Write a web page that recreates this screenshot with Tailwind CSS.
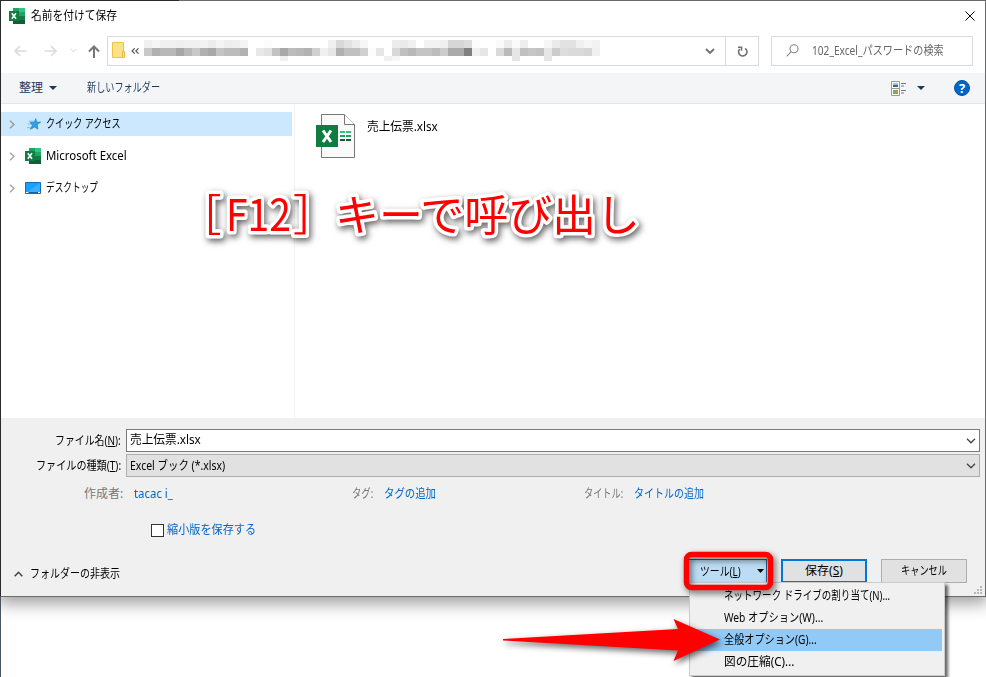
<!DOCTYPE html>
<html lang="ja" class="h-full">

<head>
    <meta charset="UTF-8">
    <meta name="viewport" content="width=device-width, initial-scale=1.0">
    <title>名前を付けて保存</title>
    <script src="https://cdn.jsdelivr.net/npm/@tailwindcss/browser@4"></script>
</head>

<body class="relative h-[677px] w-[986px] overflow-hidden bg-white font-['Noto_Sans','Noto_Sans_CJK_JP',sans-serif] text-[12px] leading-4 text-black">
    <svg class="hidden">
        <symbol id="excel" viewBox="0 0 16 16">
            <path d="M4 0h12v16H4z" fill="#21a366" />
            <path d="M10 0h6v4h-6z" fill="#33c481" />
            <path d="M4 4h6v4H4z" fill="#107c41" />
            <path d="M4 8h6v4H4zM4 12h12v4H4z" fill="#185c37" />
            <path d="M10 8h6v4h-6z" fill="#107c41" />
            <path d="M0 3h10v10H0z" fill="#107c41" />
            <path d="M2.800 5.200l4.200 5.600M7 5.200l-4.200 5.600" stroke="#fff" stroke-width="1.600" />
        </symbol>
        <symbol id="chevron" viewBox="0 0 10 6">
            <path d="M1 .8l4 4 4-4" fill="none" stroke="currentColor" stroke-width="1.300" />
        </symbol>
    </svg>

    <!-- dialog -->
    <div class="flex h-[597px] w-full flex-col border border-t-[#6b6b6b] border-r-[#6b6b6b] border-b-[#6b6b6b] border-l-[#2b2b2b] bg-white shadow-[0_4px_16px_2px_rgba(0,0,0,0.4)]">
        <div class="flex h-[29px] shrink-0 items-center pl-2 pr-[10px]">
            <svg class="mr-[6px] size-4"><use href="#excel" /></svg>
            <span data-fit="86">名前を付けて保存</span>
            <svg class="ml-auto size-[10px]" viewBox="0 0 11 11"><path d="M.5.5l10 10M10.500.5l-10 10" stroke="#000" stroke-width="1.100" /></svg>
        </div>

        <div class="flex h-[43px] shrink-0 items-center pb-[2px] pl-[13px] pr-3">
            <svg class="mr-[17px] h-3 w-[13px]" viewBox="0 0 13 12" fill="none" stroke="#dcdcdc" stroke-width="1.700"><path d="M12.500 6H1M6 1L1 6l5 5" /></svg>
            <svg class="mr-[13px] h-3 w-[13px]" viewBox="0 0 13 12" fill="none" stroke="#dcdcdc" stroke-width="1.700"><path d="M.5 6H12M7 1l5 5-5 5" /></svg>
            <svg class="mr-[11px] h-[5px] w-[7px] text-[#d0d0d0]"><use href="#chevron" /></svg>
            <svg class="mr-[7px] mt-0.5 h-[13px] w-3" viewBox="0 0 12 13" fill="none" stroke="#777" stroke-width="2"><path d="M6 13V1.500M1 6.500l5-5 5 5" /></svg>
            <div class="flex h-[30px] w-[652px] items-center border border-[#d9d9d9] pl-1">
                <svg class="-mt-0.5 h-4 w-[13px]" viewBox="0 0 13 16"><path d="M.5.5h11v15H.5z" fill="#ffe08a" stroke="#f0c443" /><path d="M10.500 9.500h2v6h-2z" fill="#ffe9a6" stroke="#e8b93a" /></svg>
                <svg class="ml-1.5 h-[6px] w-2" viewBox="0 0 8 6" fill="none" stroke="#555" stroke-width="1.100"><path d="M3.700.3L1 3l2.700 2.700M7.500.3L4.800 3l2.700 2.700" /></svg>
                <svg id="mosaic" class="ml-[5px] mt-[-1px] h-[21px] w-[456px]" shape-rendering="crispEdges"></svg>
                <svg class="ml-auto mr-[10px] mt-0.5 h-[7px] w-[10px]" viewBox="0 0 10 7"><path d="M1 1l4 4 4-4" fill="none" stroke="#707070" stroke-width="1.800" /></svg>
                <div class="flex h-full w-[33px] items-center justify-center border-l border-[#d9d9d9]">
                    <svg class="mt-px size-[11px]" viewBox="0 0 11 11" fill="none" stroke="#707070" stroke-width="1.600"><path d="M8.200 2.300A4.200 4.200 0 1 1 2.600 3" /><path d="M1 1.300h3.500v3.500" /></svg>
                </div>
            </div>
            <div class="ml-3 flex h-[30px] w-[202px] items-center border border-[#d9d9d9] pl-[14px] text-[#666]">
                <svg class="mr-[13px] size-[13px]" viewBox="0 0 13 13" fill="none" stroke="#8a8290" stroke-width="1.100"><circle cx="8" cy="4.800" r="4" /><path d="M5.200 7.700L.7 12.300" /></svg>
                <span data-fit="132">102_Excel_パスワードの検索</span>
            </div>
        </div>

        <div class="flex h-[31px] shrink-0 items-center border-b border-[#e5e5e5] bg-[#f4f5f7] pl-[18px] pr-[15px] text-[#1e395b]">
            <span data-fit="24">整理</span>
            <svg class="ml-[6px] h-1 w-[8px]" viewBox="0 0 8 4"><path d="M0 0h8L4 4z" fill="#1e395b" /></svg>
            <span class="ml-[30px]" data-fit="73">新しいフォルダー</span>
            <svg class="ml-auto h-[15px] w-4" viewBox="0 0 16 15">
                <path d="M.5.5h8v14h-8zM.5 7.500h8" fill="#fff" stroke="#999" />
                <path d="M2 2h5v2H2z" fill="#8ec5ee" /><path d="M2 4h5v2H2z" fill="#2f6596" />
                <path d="M2 9h5v4H2z" fill="#7cab4c" /><path d="M4 10h3v2H4z" fill="#d98745" />
                <path d="M10 2.500h5M10 5h3M10 9.500h5M10 12h3" stroke="#777" />
            </svg>
            <svg class="ml-2.5 mr-px h-1 w-[8px]" viewBox="0 0 8 4"><path d="M0 0h8L4 4z" fill="#1e395b" /></svg>
            <div class="ml-[28px] flex size-4 items-center justify-center rounded-full border border-[#0a50a0] bg-[#0067c8] text-[13px] font-bold text-white">?</div>
        </div>

        <div class="flex h-[314px] shrink-0">
            <div class="w-[294px] border-r border-[#f2f2f2] pt-[8px]">
                <div class="flex h-6 w-[291px] items-center bg-[#cce8ff] pl-2">
                    <svg class="h-[9px] w-[6px]" viewBox="0 0 6 9"><path d="M1 .7l4 3.800-4 3.800" fill="none" stroke="#9a9a9a" stroke-width="1.500" /></svg>
                    <svg class="ml-[12px] mr-[5px] h-3 w-[14px]" viewBox="0 0 15 12"><path d="M2 3h5M1 6h5M0 10h5" stroke="#67b7e8" stroke-width=".9" /><path d="M9.500 .3l.7 3.600 4.500.1-3.700 2.500.6 5-3.400-2.300-4.500 2.500 2.100-4.400-2.300-2.900 4-.2z" fill="#2ba1e8" stroke="#1b7fc4" stroke-width=".7" /></svg>
                    <span data-fit="75">クイック アクセス</span>
                </div>
                <div class="mt-2 flex h-6 items-center pl-2">
                    <svg class="h-[9px] w-[6px]" viewBox="0 0 6 9"><path d="M1 .7l4 3.800-4 3.800" fill="none" stroke="#a6a6a6" stroke-width="1.500" /></svg>
                    <svg class="ml-[10px] mr-[5px] size-4"><use href="#excel" /></svg>
                    <span data-fit="81">Microsoft Excel</span>
                </div>
                <div class="mt-2 flex h-6 items-center pl-2">
                    <svg class="h-[9px] w-[6px]" viewBox="0 0 6 9"><path d="M1 .7l4 3.800-4 3.800" fill="none" stroke="#a6a6a6" stroke-width="1.500" /></svg>
                    <svg class="ml-[10px] mr-[5px] h-3 w-4" viewBox="0 0 16 12"><path d="M.5.5h15v11H.5z" fill="#1a9fff" stroke="#0b6fc0" /><path d="M1 11L15 1v10z" fill="#3aaeff" /><path d="M2 10.500h1M4 10.500h9" stroke="#0a65b0" /><path d="M1 10.500h2M13 10.500h2" stroke="#fff" /></svg>
                    <span data-fit="52">デスクトップ</span>
                </div>
            </div>
            <div class="flex items-start pl-[21px] pt-[10px]">
                <svg class="h-[44px] w-[39px]" viewBox="0 0 39 44">
                    <path d="M5.500.5h23l10 10v33h-33z" fill="#fafafa" stroke="#777" />
                    <path d="M28.500.5v10h10" fill="#fff" stroke="#777" />
                    <path d="M0 11h22v22H0z" fill="#107c41" />
                    <path d="M7 16.500l8 11.500M15 16.500L7 28" stroke="#fff" stroke-width="3" />
                    <path d="M24 18h5M30 18h5" stroke="#33c481" stroke-width="2" />
                    <path d="M24 22h5M30 22h5" stroke="#21a366" stroke-width="2" />
                    <path d="M24 26h5M30 26h5" stroke="#185c37" stroke-width="2" />
                </svg>
                <span class="ml-[12px] mt-[5px]" data-fit="71">売上伝票.xlsx</span>
            </div>
        </div>

        <div class="flex min-h-0 flex-1 flex-col bg-[#f0f0f0]">
            <div class="mt-[11px] flex h-[23px] shrink-0 items-center">
                <div class="flex w-[120px] justify-end"><span data-fit="66">ファイル名(<u>N</u>):</span></div>
                <div class="ml-[5px] flex h-[23px] w-[854px] items-center border border-[#7a7a7a] bg-white pl-[3px] pr-[3px]">
                    <span class="-mt-0.5" data-fit="71">売上伝票.xlsx</span>
                    <svg class="ml-auto h-[6px] w-[10px] text-[#444]"><use href="#chevron" /></svg>
                </div>
            </div>
            <div class="mt-[2px] flex h-[23px] shrink-0 items-center">
                <div class="flex w-[120px] justify-end"><span data-fit="85">ファイルの種類(<u>T</u>):</span></div>
                <div class="ml-[5px] flex h-[23px] w-[854px] items-center border border-[#adadad] bg-[#e1e1e1] pl-[3px] pr-[3px]">
                    <span data-fit="95">Excel ブック (*.xlsx)</span>
                    <svg class="ml-auto h-[6px] w-[10px] text-[#444]"><use href="#chevron" /></svg>
                </div>
            </div>
            <div class="mt-[9px] flex h-4 shrink-0 items-center pl-[83px] text-[#0066cc]">
                <span class="text-[#777]" data-fit="39">作成者:</span>
                <span class="ml-[11px] w-[218px]"><span data-fit="39">tacac i_</span></span>
                <span class="text-[#777]" data-fit="21">タグ:</span>
                <span class="ml-[11px] w-[200px]"><span data-fit="52">タグの追加</span></span>
                <span class="text-[#777]" data-fit="39">タイトル:</span>
                <span class="ml-[10px]" data-fit="70">タイトルの追加</span>
            </div>
            <div class="mt-5 flex h-4 shrink-0 items-center pl-[150px] text-[#0066cc]">
                <div class="mr-[3px] mt-px size-[13px] border border-[#333] bg-white"></div>
                <span data-fit="89">縮小版を保存する</span>
            </div>
            <div class="mt-[20px] flex h-[26px] shrink-0 items-center pl-[13px]">
                <svg class="mr-[7px] mt-1.5 h-[6px] w-[9px]" viewBox="0 0 9 6"><path d="M.7 5.300l3.800-4 3.800 4" fill="none" stroke="#444" stroke-width="1.600" /></svg>
                <span class="mt-1.5" data-fit="90">フォルダーの非表示</span>
                <div class="ml-auto mr-[18px] flex gap-[14px]">
                    <div class="flex h-[24px] w-[79px] items-center border border-[#2c628b] bg-[#bcdcf4] pl-[11px]">
                        <span class="mt-0.5" data-fit="41">ツール(<u>L</u>)</span>
                        <svg class="ml-[16px] h-1 w-[7px]" viewBox="0 0 7 4"><path d="M0 0h7L3.500 4z" /></svg>
                    </div>
                    <div class="flex h-[24px] w-[86px] items-center justify-center border-2 border-[#0078d7] bg-[#e1e1e1]"><span data-fit="38">保存(<u>S</u>)</span></div>
                    <div class="flex h-[24px] w-[86px] items-center justify-center border border-[#adadad] bg-[#e1e1e1]"><span data-fit="46">キャンセル</span></div>
                </div>
            </div>
        </div>
    </div>

    <!-- window behind the dialog -->
    <div class="relative h-20 w-px bg-[#4a5563]"></div>
    <div class="absolute left-0 top-0 h-px w-[179px] bg-[#2b2b2b]"></div>

    <svg class="absolute left-[974px] top-[586px] h-2 w-[9px]" viewBox="0 0 9 8" fill="#b8b8b8"><path d="M6 0h2v2H6zM3 3h2v2H3zM6 3h2v2H6zM0 6h2v2H0zM3 6h2v2H3zM6 6h2v2H6z" /></svg>

    <!-- tools menu -->
    <div class="absolute left-[689px] top-[582px] flex h-[94px] w-[256px] flex-col border border-[#ccc] bg-[#f0f0f0] pt-[2px] shadow-[3px_3px_3px_rgba(0,0,0,0.6)]">
        <div class="flex h-[22px] items-center pl-[34px]"><span data-fit="166">ネットワーク ドライブの割り当て(N)...</span></div>
        <div class="flex h-[22px] items-center pl-[34px]"><span data-fit="99">Web オプション(W)...</span></div>
        <div class="mr-[2px] flex h-[22px] items-center bg-[#91c9f7] pl-[34px]"><span data-fit="93">全般オプション(G)...</span></div>
        <div class="flex h-[22px] items-center pl-[34px]"><span data-fit="70">図の圧縮(C)...</span></div>
    </div>

    <!-- callouts -->
    <svg class="absolute left-0 top-0 h-[677px] w-[986px] drop-shadow-[2px_3px_3px_rgba(0,0,0,0.6)]" viewBox="0 0 986 677">
        <rect x="686.500" y="554.500" width="84" height="33" rx="5" fill="none" stroke="#f00" stroke-width="5.500" />
        <path d="M503 639L678 629 673.500 619 720 639.500 673.500 661 678 650.500 503 640.500z" fill="#f00" />
        <g class="font-['Noto_Sans_CJK_JP',sans-serif] text-[43.5px] font-normal" fill="#f00" stroke="#fff" stroke-width="7" stroke-linejoin="round" paint-order="stroke">
            <text x="178" y="231">［</text>
            <text x="226" y="231" textLength="65" lengthAdjust="spacingAndGlyphs">F12</text>
            <text x="293" y="231">］</text>
            <text x="335" y="231" textLength="305" lengthAdjust="spacingAndGlyphs">キーで呼び出し</text>
        </g>
    </svg>

    <script>
        function fit(el) {
            let natural = el.offsetWidth
            let target = Number(el.dataset.fit)
            if (!natural) return
            el.style.transform = `scaleX(${target / natural})`
            el.style.marginRight = `${target - natural}px`
        }

        // runs again whenever the styles or the font change a label's size
        let observer = new ResizeObserver((entries) => {
            entries.forEach((entry) => fit(entry.target))
        })
        document.querySelectorAll('[data-fit]').forEach((el) => {
            el.style.display = 'inline-block'
            el.style.whiteSpace = 'nowrap'
            el.style.flexShrink = 0
            el.style.transformOrigin = '0 50%'
            fit(el)
            observer.observe(el)
        })
        window.addEventListener('load', () => {
            document.querySelectorAll('[data-fit]').forEach(fit)
        })

        // blurred path, one grey per 8px cell
        let rows = [
            'f0 f6 f0 f0 ee f0 f0 f2 ec f4 ee f0 f4 ff ff fc ff ff ff ff ff ff ff f0 d8 e2 ec f6 ff ff ff ec ea f0 ff f2 f2 f0 d6 d6 dc fc ff ff fa ec fa ee ff ff f6 ea e2 e2 f0 f6 f2',
            'c8 b0 b8 b8 a6 b8 c8 b0 a8 c4 bc bc b2 ff e8 e2 c2 a8 bc b8 b2 d0 f0 e6 b0 c0 c0 d0 fc e6 ff d8 c0 b8 c4 c4 bc cc aa aa 80 f0 e6 ff da ba e6 c0 c6 c2 e6 cc dd da da d6 f0',
            'ff ff ff ff ff ff ff ff ff ff ff ff ff ff ff ff ff f0 ff ff ff ff ff ff ff ff ff ff ff ff f0 f6 ff ff ff ff ff ff ff ff ff ff ff ff ff ff e6 ff ff ff e6 ff ff ff ff ff ff',
        ]
        let mosaic = document.getElementById('mosaic')
        rows.forEach((row, y) => {
            row.split(' ').forEach((c, x) => {
                let cell = document.createElementNS('http://www.w3.org/2000/svg', 'rect')
                cell.setAttribute('x', x * 8)
                cell.setAttribute('y', y * 8)
                cell.setAttribute('width', 8)
                cell.setAttribute('height', y == 2 ? 5 : 8)
                cell.setAttribute('fill', `#${c}${c}${c}`)
                mosaic.appendChild(cell)
            })
        })
    </script>
</body>

</html>
